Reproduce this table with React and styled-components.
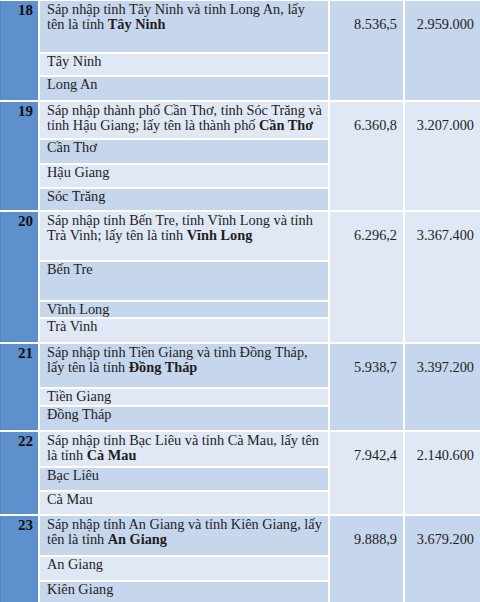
import styled, { createGlobalStyle } from 'styled-components'

const DARK = '#c6d6ec'
const LIGHT = '#dfe8f4'

const GlobalStyle = createGlobalStyle`
  html, body {
    margin: 0;
    padding: 0;
    background: #ffffff;
  }
  body {
    font-family: 'Liberation Serif', 'Times New Roman', 'DejaVu Serif', serif;
    color: #1e1e1e;
  }
`

// each merger row: first line, second line, bold name at the end of line two
const groups = [
  {
    num: 18,
    first: 'Sáp nhập tỉnh Tây Ninh và tỉnh Long An, lấy',
    second: 'tên là tỉnh ',
    bold: 'Tây Ninh',
    mainH: 51,
    mainTone: DARK,
    subs: [
      { name: 'Tây Ninh', h: 21, tone: LIGHT },
      { name: 'Long An', h: 23, tone: DARK },
    ],
    area: '8.536,5',
    pop: '2.959.000',
    valueTone: DARK,
  },
  {
    num: 19,
    first: 'Sáp nhập thành phố Cần Thơ, tỉnh Sóc Trăng và',
    second: 'tỉnh Hậu Giang; lấy tên là thành phố ',
    bold: 'Cần Thơ',
    mainH: 36,
    mainTone: LIGHT,
    subs: [
      { name: 'Cần Thơ', h: 23, tone: DARK },
      { name: 'Hậu Giang', h: 22, tone: LIGHT },
      { name: 'Sóc Trăng', h: 21, tone: DARK },
    ],
    area: '6.360,8',
    pop: '3.207.000',
    valueTone: LIGHT,
  },
  {
    num: 20,
    first: 'Sáp nhập tỉnh Bến Tre, tỉnh Vĩnh Long và tỉnh',
    second: 'Trà Vinh; lấy tên là tỉnh ',
    bold: 'Vĩnh Long',
    mainH: 48,
    mainTone: LIGHT,
    subs: [
      { name: 'Bến Tre', h: 38, tone: DARK },
      { name: 'Vĩnh Long', h: 15, tone: DARK },
      { name: 'Trà Vinh', h: 23, tone: LIGHT },
    ],
    area: '6.296,2',
    pop: '3.367.400',
    valueTone: LIGHT,
  },
  {
    num: 21,
    first: 'Sáp nhập tỉnh Tiền Giang và tỉnh Đồng Tháp,',
    second: 'lấy tên là tỉnh ',
    bold: 'Đồng Tháp',
    mainH: 43,
    mainTone: DARK,
    subs: [
      { name: 'Tiền Giang', h: 16, tone: LIGHT },
      { name: 'Đồng Tháp', h: 23, tone: DARK },
    ],
    area: '5.938,7',
    pop: '3.397.200',
    valueTone: DARK,
  },
  {
    num: 22,
    first: 'Sáp nhập tỉnh Bạc Liêu và tỉnh Cà Mau, lấy tên',
    second: 'là tỉnh ',
    bold: 'Cà Mau',
    mainH: 34,
    mainTone: LIGHT,
    subs: [
      { name: 'Bạc Liêu', h: 22, tone: DARK },
      { name: 'Cà Mau', h: 22, tone: LIGHT },
    ],
    area: '7.942,4',
    pop: '2.140.600',
    valueTone: LIGHT,
  },
  {
    num: 23,
    first: 'Sáp nhập tỉnh An Giang và tỉnh Kiên Giang, lấy',
    second: 'tên là tỉnh ',
    bold: 'An Giang',
    mainH: 39,
    mainTone: DARK,
    subs: [
      { name: 'An Giang', h: 23, tone: LIGHT },
      { name: 'Kiên Giang', h: 22, tone: DARK },
    ],
    area: '9.888,9',
    pop: '3.679.200',
    valueTone: DARK,
  },
]

export default function App() {
  return (
    <>
      <GlobalStyle />
      <Table>
        {groups.map((g) => (
          <Group key={g.num}>
            <NumCell $span={g.subs.length + 1}>{g.num}</NumCell>
            <MainCell $h={g.mainH} $tone={g.mainTone}>
              <Line>{g.first}</Line>
              <Line>
                {g.second}
                <Strong>{g.bold}</Strong>
              </Line>
            </MainCell>
            <ValueCell $col={3} $span={g.subs.length + 1} $tone={g.valueTone}>
              {g.area}
            </ValueCell>
            <ValueCell $col={4} $span={g.subs.length + 1} $tone={g.valueTone}>
              {g.pop}
            </ValueCell>
            {g.subs.map((s) => (
              <SubCell key={s.name} $h={s.h} $tone={s.tone}>
                {s.name}
              </SubCell>
            ))}
          </Group>
        ))}
      </Table>
    </>
  )
}

const Table = styled.div`
  width: 480px;
  height: 602px;
  overflow: hidden;
  display: flex;
  flex-direction: column;
  gap: 2px;
  padding-top: 1px;
  box-sizing: border-box;
  background: #ffffff;
`

const Group = styled.div`
  display: grid;
  grid-template-columns: 38px 288px 73px 75px;
  column-gap: 2px;
  row-gap: 2px;
  font-size: 14.3px;
  line-height: 14.5px;
`

const NumCell = styled.div`
  grid-column: 1;
  grid-row: 1 / span ${({ $span }) => $span};
  background: #5e90cd;
  border-left: 1px solid #5283c2;
  font-weight: 700;
  font-size: 15px;
  color: #111;
  text-align: right;
  padding: 2px 5px 0 0;
`

const MainCell = styled.div`
  grid-column: 2;
  grid-row: 1;
  height: ${({ $h }) => $h}px;
  background: ${({ $tone }) => $tone};
  padding: 1px 4px 0 7px;
  box-sizing: border-box;
  overflow: hidden;
`

const Line = styled.div`
  white-space: nowrap;
`

const Strong = styled.span`
  font-weight: 700;
`

const SubCell = styled.div`
  grid-column: 2;
  height: ${({ $h }) => $h}px;
  background: ${({ $tone }) => $tone};
  padding: 0 4px 0 7px;
  box-sizing: border-box;
  overflow: hidden;
  line-height: 15px;
`

const ValueCell = styled.div`
  grid-column: ${({ $col }) => $col};
  grid-row: 1 / span ${({ $span }) => $span};
  background: ${({ $tone }) => $tone};
  text-align: right;
  padding: 15.5px 6px 0 0;
`
